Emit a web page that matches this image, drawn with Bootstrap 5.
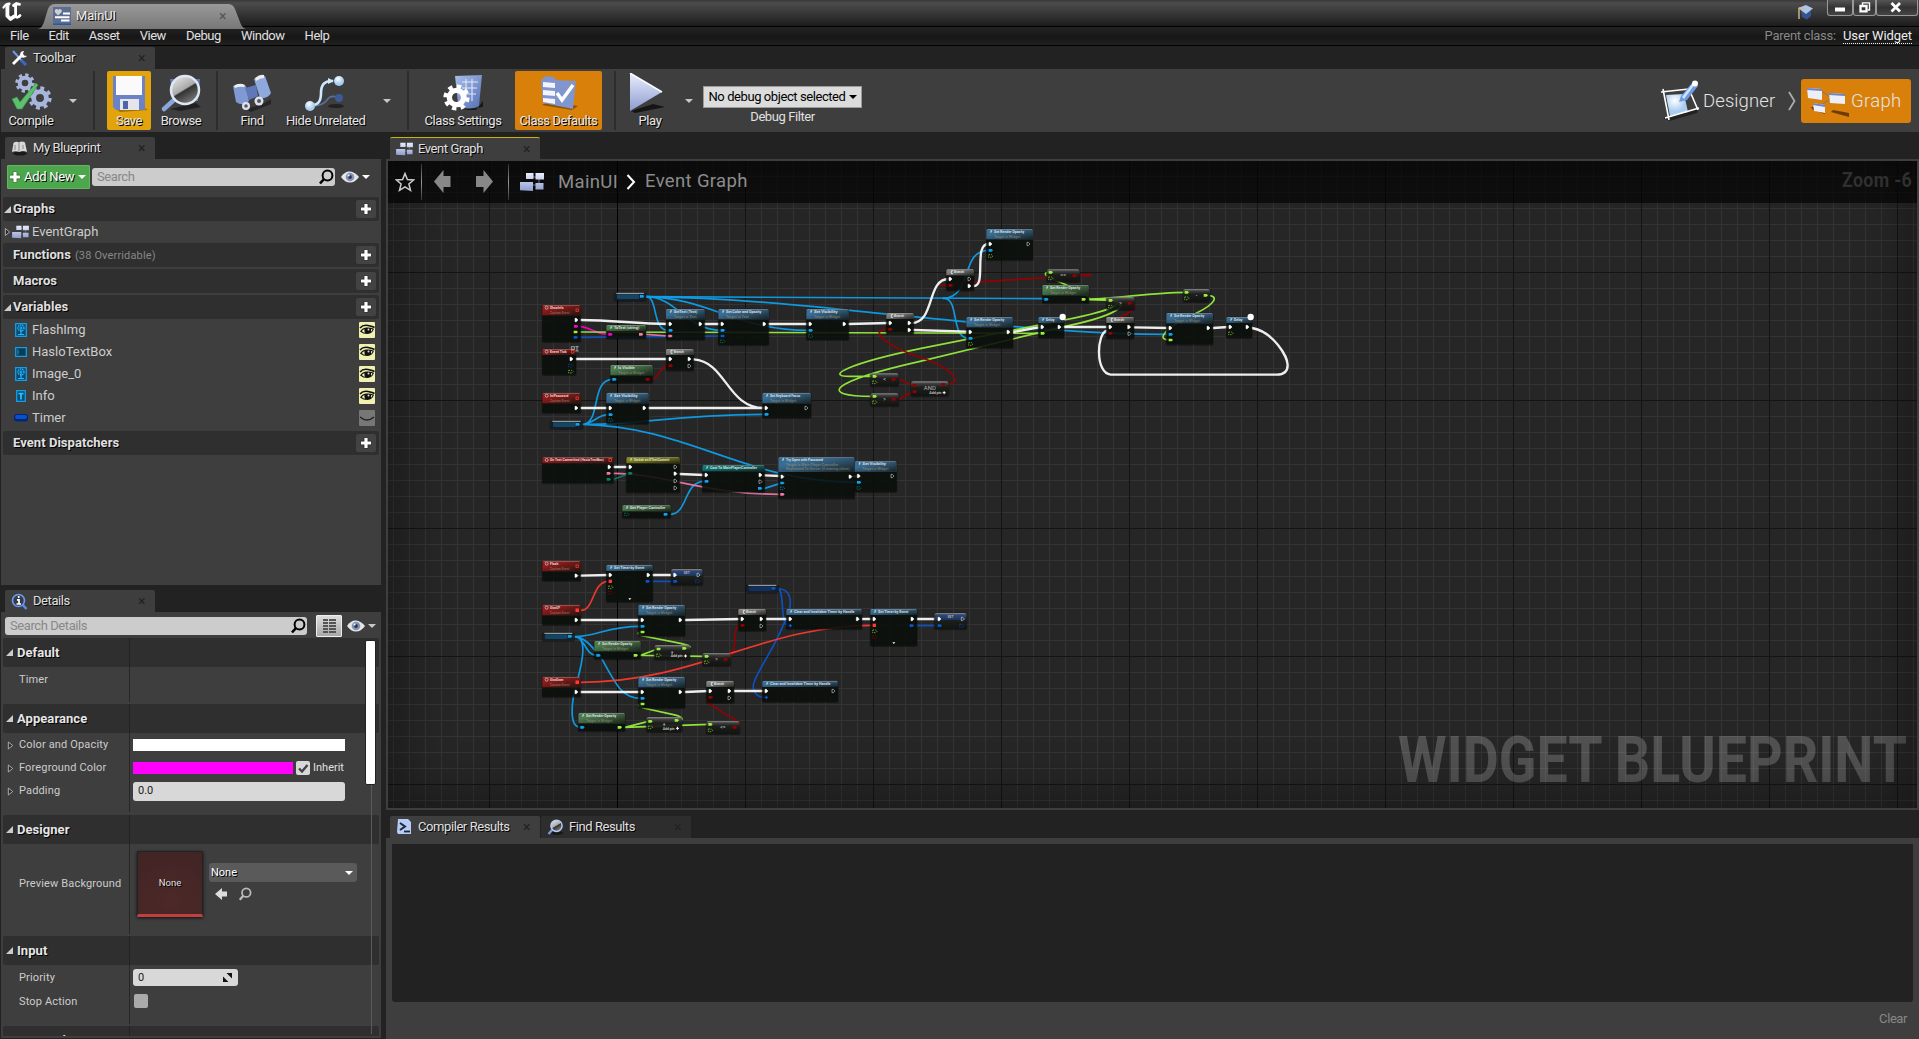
<!DOCTYPE html>
<html lang="en" data-bs-theme="dark">
<head>
<meta charset="utf-8">
<title>MainUI</title>
<link rel="stylesheet" href="https://cdn.jsdelivr.net/npm/bootstrap@5.3.0/dist/css/bootstrap.min.css">
<style>
:root{--panel:#3e3e3e;--well:#222;--head:#2f2f2f}
html,body{height:100%;overflow:hidden}
body{font:13px/16px Roboto,"Liberation Sans",sans-serif;background:var(--well);color:#e0e0e0}
svg{display:block;flex:none}
.sh{text-shadow:1px 1px 0 #000}
.cond{letter-spacing:-.42px}
.titlebar{height:27px;background:linear-gradient(#383838 0,#4c4c4c 3px,#3c3c3c 11px,#1c1c1c 26px);border-bottom:1px solid #000}
.uelogo{width:32px;height:26px}
.doctab{width:208px;height:25px;margin-left:6px;background:linear-gradient(#999,#858585 60%,#777);clip-path:path("M0 25Q4 24 6 18L10 5Q12 0 17 0H190Q195 0 197 5L202 18Q204 24 208 25Z");padding:0 18px 1px 15px;color:#eee}
.winbtn{height:16px;border:1px solid #999;border-top:0;border-radius:0 0 3px 3px;background:linear-gradient(#555,#333 50%,#444)}
.menubar{height:19px;background:linear-gradient(#242424,#161616 55%,#212121);border-bottom:1px solid #000;font-size:13px;padding:0 7px 0 10px;letter-spacing:-.45px}
.menubar .mi{margin-right:20px}
.menubar .pc{color:#888;letter-spacing:-.25px}
.dotted{border-bottom:1px dotted #eee;line-height:14px;margin-left:7px;color:#eee;letter-spacing:-.1px}
.tabrow{height:23px;padding-left:4px}
.tabx{width:150px;height:22px;background:var(--panel);padding:0 8px 0 6px;border-radius:2px 2px 0 0}
.tabx .lbl{margin-left:5px;flex:1}
.tabx.active-top{border-top:1px solid #c9b400}
.tabx.dim{background:#2d2d2d}
.cls{color:#222;font-size:14px;line-height:14px;width:9px}
.toolbar{height:63px;background:var(--panel);margin-left:1px}
.tool{height:59px;padding-top:2px;white-space:nowrap;color:#e6e6e6;border-radius:2px}
.tool .cap{line-height:16px;margin-top:0}
.tsep{width:2px;height:59px;background:#2d2d2d}
.caret{width:0;height:0;border:4px solid transparent;border-top:4px solid #c8c8c8;border-bottom:0;flex:none}
.caret.w{border-top-color:#fff}
.dbg{width:159px;height:22px;background:#dcdcdc;color:#000;border:1px solid #9c9c9c}
.modebtn{font-size:18.500px;font-weight:300;height:44px;border-radius:3px;color:#e4e4e4}
.side{width:381px}
.pane{background:var(--panel);margin-left:1px;overflow:hidden}
.addnew{width:83px;height:24px;background:#4ca64c;border:1px solid #64b464;border-radius:1px;color:#fff;padding-left:1px;white-space:nowrap;letter-spacing:-.3px}
.find{height:18px;background:#ccc;border-radius:3px;color:#888;padding:0 1px 0 5px}
.hd{height:24px;background:var(--head);border-radius:2px;margin:0 2px;font-weight:700;padding:0 3px 0 1px;letter-spacing:.05px}
.plus{width:20px;height:18px;background:#434343;border-radius:2px}
.li{height:22px;padding:0 6px 0 14px;color:#ccc}
.li .ic{width:17px}
.eye{width:16px;height:16px;background:#f0f0b0;border-radius:1px}
.eye.off{background:#777}
.tri{width:0;height:0;border-left:7px solid transparent;border-bottom:7px solid #ccc}
.dhd{height:29px;background:var(--head);border-radius:2px;font-weight:700;font-size:13px}
.dcol{width:127px;border-right:1px solid #262626;flex:none;align-self:stretch;padding-left:16px;font-size:11px;letter-spacing:.15px;color:#ccc}
.dhd .dcol{font-size:13px;padding-left:3px;letter-spacing:.05px;color:#e6e6e6;border-color:#222}
.dsec{margin:0 2px;font-size:11px}
.drow .val{padding-left:3px}
.exp{width:9px;margin-left:-12px;margin-right:3px}
.inp{background:#d8d8d8;color:#222;border-radius:3px;padding-left:5px}
.thumb{width:66px;height:66px;background:radial-gradient(circle at 50% 80%,#4d2828,#402424);border:1px solid #222;border-bottom:3px solid #c04040;box-shadow:0 1px 3px #111;font-size:9.500px}
.combo{width:148px;height:19px;background:#5a5a5a;border-radius:3px;padding:0 4px 0 2px;color:#fff}
.sbar{right:5px;top:2px;width:11px;height:145px;background:#fff;border:1px solid #222;border-radius:2px}
.sline{right:9px;top:147px;width:1px;height:249px;background:#5a5a5a}
.graphwrap{border:2px solid var(--panel);height:651px;background:#262626}
.gshade{inset:0;box-shadow:inset 0 0 55px 4px rgba(0,0,0,.42);pointer-events:none}
.ghead{height:42px;background:rgba(0,0,0,.62);left:0;right:0;top:0;color:#8c8c8c;font-size:18.500px;letter-spacing:.35px}
.gsep{width:1px;height:36px;background:linear-gradient(#333,#999,#333)}
.log{background:var(--well);height:158px;margin:6px 6px 0;border-radius:0 0 3px 3px}
</style>
</head>
<body class="d-flex flex-column">
<svg width="0" height="0" class="position-absolute">
<defs>
<linearGradient id="ice" x1="0" y1="0" x2="0" y2="1"><stop offset="0" stop-color="#e8eeff"/><stop offset="1" stop-color="#8d9cce"/></linearGradient>
<linearGradient id="blu" x1="0" y1="0" x2="1" y2="1"><stop offset="0" stop-color="#a9bfe8"/><stop offset="1" stop-color="#5570b4"/></linearGradient>
<radialGradient id="ball" cx=".4" cy=".3"><stop offset="0" stop-color="#fff"/><stop offset="1" stop-color="#a8cdf0"/></radialGradient>
<linearGradient id="lens" x1="0" y1="0" x2=".6" y2="1"><stop offset="0" stop-color="#eee"/><stop offset=".55" stop-color="#aaa"/><stop offset=".6" stop-color="#333"/><stop offset="1" stop-color="#777"/></linearGradient>
<symbol id="i-mag" viewBox="0 0 16 16"><circle cx="9.5" cy="6.5" r="4.9" fill="none" stroke="currentColor" stroke-width="2"/><path d="M6 10L2 14.5" stroke="currentColor" stroke-width="2.6"/></symbol>
<symbol id="i-plus" viewBox="0 0 12 12"><path d="M6 .8V11.2M.8 6H11.2" stroke="#000" stroke-width="4.4" opacity=".5"/><path d="M6 1V11M1 6H11" stroke="#fff" stroke-width="3.2"/></symbol>
<symbol id="i-eye" viewBox="0 0 16 16"><path d="M1 6Q4 2.500 9 3.500T15.500 5.500" fill="none" stroke="#111" stroke-width="1.600"/><path d="M1 9.500Q3 6 7 5.500T15 6.800Q13.500 11.500 8.500 12Q4 12 1 9.500Z" fill="#111"/><path d="M2.800 9Q4 7.300 5.600 7.200Q5 9 6 10.700Q4 10.500 2.800 9ZM12 7Q13 7 13.600 7.600Q13 9 12 9.800Z" fill="#f0f0b0"/><circle cx="9.500" cy="7.600" r="1" fill="#ddd"/></symbol>
<symbol id="i-eyew" viewBox="0 0 18 12"><path d="M0 6Q4 0 9 0.5T18 6Q14 11.5 9 11.5T0 6Z" fill="#e6e6e6"/><circle cx="9" cy="6" r="4.3" fill="#8292b8"/><circle cx="9" cy="6" r="1.9" fill="#2b3550"/><circle cx="7.6" cy="4.4" r="1" fill="#fff"/></symbol>
<symbol id="i-graph" viewBox="0 0 24 20"><path d="M10 5H18M12 13H18M19 5V13" stroke="#777" fill="none"/><path d="M6 1H13.5V7H6ZM15.5 1H24V7.5H15.5ZM0 10H13V19L0 18.2ZM15.5 11H23.5V17.6H15.5Z" fill="url(#ice)"/></symbol>
<symbol id="i-exp" viewBox="0 0 8 10"><path d="M1.5 1L6.5 5L1.5 9Z" fill="#2a2a2a" stroke="#bbb"/></symbol>
<symbol id="i-img" viewBox="0 0 12 14"><path d="M.7.7H11.3V13.3H.7Z" fill="#0b4a70" stroke="#119fe6" stroke-width="1.3"/><circle cx="6" cy="5" r="3" fill="#0b4a70" stroke="#23b4ff" stroke-width="1.4" stroke-dasharray="1.4 .7"/><path d="M4.5 5H7.5M6 3.5V11.5M3 11.5H9" stroke="#23b4ff" stroke-width="1.2"/></symbol>
<symbol id="i-find" viewBox="0 0 18 16"><ellipse cx="10" cy="14" rx="6" ry="1.8" fill="#181818"/><path d="M1.5 15L6 10" stroke="#7f99dc" stroke-width="2.4"/><circle cx="9.5" cy="6.8" r="5.6" fill="url(#lens)" stroke="#b9c9f0" stroke-width="1.5"/></symbol>
<symbol id="i-gear" viewBox="-10 -10 20 20"><circle r="5.3" fill="none" stroke="currentColor" stroke-width="4"/><circle r="8.2" fill="none" stroke="currentColor" stroke-width="3" stroke-dasharray="3.22 3.22"/></symbol>
</defs></svg>

<header class="titlebar d-flex align-items-start">
  <div class="uelogo"><svg width="24" height="24" viewBox="0 0 24 24"><g fill="none" stroke="#fff" stroke-linecap="round" stroke-linejoin="round"><path d="M3.500 7.500Q6 3.500 9.500 3.600Q7.600 5 7.900 8V15.500" stroke-width="2.200"/><path d="M7.400 5.500V16L10.500 19L14 16.500" stroke-width="3.800"/><path d="M15.600 5.500V16.500Q17 18.500 20 15.500M13.500 5.500L16.500 3.500L19.500 4.300" stroke-width="2.800"/></g></svg></div>
  <div class="doctab d-flex align-items-center mt-1">
    <svg width="18" height="18" viewBox="0 0 18 18" class="me-1"><path d="M0 0H18V18H0Z" fill="#5b6d92"/><path d="M0 16.5H18V18H0Z" fill="#2758a8"/><path d="M5 8.5L1.8 5Q1.5 2 3.5 2Q5 2 5.2 3.2Q5.5 2 7 2Q9 2 8.700 5Z" fill="#cfcfcf"/><path d="M10 6.500H17M2 10.200H16.500M8 13.500H16.500" stroke="#fff" stroke-width="2.100"/></svg>
    <span class="sh flex-grow-1" style="padding-left:1px;letter-spacing:-.15px">MainUI</span><span class="cls" style="color:#555">×</span>
  </div>
  <div class="ms-auto d-flex">
    <svg width="18" height="17" viewBox="0 0 18 17" class="me-2 mt-1"><path d="M4 7L5 13L10 15.500L14 12V7Z" fill="#33548c"/><path d="M1 4L9 1L16 4.500L9 10Z" fill="#a8c6f0"/><path d="M2 4V15M2 4L9 5" stroke="#d8b98a" stroke-width="1.400" fill="none"/></svg>
    <span class="winbtn ms-1" style="width:26px"><svg width="24" height="15"><path d="M7 9.500H17" stroke="#fff" stroke-width="4"/></svg></span>
    <span class="winbtn" style="width:23px"><svg width="21" height="15"><path d="M8.500 5V2.900H15.500V10H13.500" fill="none" stroke="#fff" stroke-width="1.400"/><path d="M6.500 6H12.500V11.300H6.500Z" fill="none" stroke="#fff" stroke-width="2.300"/></svg></span>
    <span class="winbtn" style="width:42px;margin-right:1px"><svg width="40" height="15"><path d="M14.500 3L23 11.500M23 3L14.500 11.500" stroke="#fff" stroke-width="2.800"/></svg></span>
  </div>
</header>
<nav class="menubar d-flex align-items-center">
  <span class="mi">File</span><span class="mi">Edit</span><span class="mi">Asset</span><span class="mi">View</span><span class="mi">Debug</span><span class="mi">Window</span><span class="mi">Help</span>
  <span class="ms-auto pc">Parent class:</span><span class="dotted">User Widget</span>
</nav>
<div class="tabrow d-flex align-items-end" style="padding-left:5px"><div class="tabx d-flex align-items-center">
  <svg width="17" height="16" viewBox="0 0 17 16"><path d="M2 1L11 11" stroke="#6f9be8" stroke-width="2"/><path d="M10 10L15 15" stroke="#3868c8" stroke-width="3"/><path d="M2 14L10 6" stroke="#fff" stroke-width="2.800"/><path d="M10 2Q8 5 10 7Q13 9 16 6L13 5.500L12 3.500L13 1Q11 1 10 2Z" fill="#fff"/></svg>
  <span class="lbl sh" style="letter-spacing:-.25px">Toolbar</span><span class="cls">×</span></div></div>

<div class="toolbar d-flex align-items-center flex-shrink-0">
  <div class="tool text-center" style="width:60px"><svg width="42" height="40" viewBox="0 0 42 40" class="mx-auto"><g color="#a9b6dc"><use href="#i-gear" x="5" y="0" width="20" height="20"/><use href="#i-gear" x="18" y="13" width="24" height="24"/></g><path d="M2 26L7 24L10 29L26 10L28 12L12 36H7Z" fill="#5cc06c" stroke="#3d8f4a" stroke-width=".6"/></svg><div class="cap sh cond">Compile</div></div>
  <div class="d-flex justify-content-center" style="width:24px"><i class="caret"></i></div>
  <div class="tsep ms-2"></div>
  <div class="tool text-center" style="width:44px;margin-left:12px;background:#e2a30c"><svg width="38" height="40" viewBox="0 0 38 40" class="mx-auto"><path d="M6 36L30 32L38 37L10 39Z" fill="#7a5200" opacity=".6"/><path d="M3 3H35V37H6L3 34Z" fill="#6a83c6"/><path d="M6 3H32V22H6Z" fill="#fafafa"/><path d="M10 26H29V37H10Z" fill="#e4e4ea"/><path d="M13 28H18V36H13Z" fill="#4d64a8"/></svg><div class="cap sh cond">Save</div></div>
  <div class="tool text-center" style="width:60px"><svg width="42" height="40" viewBox="0 0 42 40" class="mx-auto"><path d="M10 36L36 30L41 34L20 38Z" fill="#151515" opacity=".7"/><path d="M10 6L40 6L38 28L14 28Z" fill="#5f78b8"/><path d="M4 36L15 26" stroke="#8ba6dd" stroke-width="4.500" stroke-linecap="round"/><circle cx="25" cy="17" r="14" fill="url(#lens)" stroke="#dfe6f4" stroke-width="2.500"/></svg><div class="cap sh cond">Browse</div></div>
  <div class="tsep" style="margin-left:5px"></div>
  <div class="tool text-center" style="width:68px"><svg width="42" height="40" viewBox="0 0 42 40" class="mx-auto"><path d="M14 36L30 32L40 26L40 31L20 39Z" fill="#151515" opacity=".6"/><path d="M2 13Q8 9 15 13L18 28Q12 34 5 29Z" fill="#8099d2"/><path d="M23 6Q29 2 34 3L40 20Q37 26 29 25Z" fill="#8fa8de"/><path d="M14 15L25 12L27 23L18 27Z" fill="#6078b8"/><path d="M3 13Q8 9 14 12L13 14Q8 13 4 15ZM24 5Q29 1 33 2L33 5Q29 5 25 8Z" fill="#eee"/><circle cx="15" cy="33" r="4" fill="#dde3ee"/><circle cx="28" cy="28" r="4.500" fill="#dde3ee"/><circle cx="15" cy="33" r="1.800" fill="#556"/><circle cx="28" cy="28" r="2" fill="#556"/></svg><div class="cap sh cond">Find</div></div>
  <div class="tool text-center" style="width:78px"><svg width="44" height="40" viewBox="0 0 44 40" class="mx-auto"><path d="M8 33Q20 33 24 27T36 25" fill="none" stroke="#587098" stroke-width="1.800"/><circle cx="36" cy="25" r="4" fill="#3d5a94"/><ellipse cx="33" cy="33" rx="8" ry="2" fill="#222"/><path d="M8 32Q18 33 18 20T30 8" fill="none" stroke="#cde8ff" stroke-width="2.600"/><path d="M25 5L31 8L25 11Z" fill="#cde8ff"/><circle cx="7" cy="33" r="5" fill="url(#ball)"/><circle cx="36" cy="8" r="5" fill="url(#ball)"/></svg><div class="cap sh cond">Hide Unrelated</div></div>
  <div class="d-flex justify-content-center" style="width:43px;padding-left:2px"><i class="caret"></i></div>
  <div class="tsep"></div>
  <div class="tool text-center" style="width:90px;margin-left:9px;margin-right:1px"><svg width="42" height="40" viewBox="0 0 42 40" class="mx-auto"><path d="M20 37L34 37L41 28L41 34Z" fill="#181818"/><path d="M13 3L40 2L37 33Q30 37 20 34L16 30Z" fill="url(#blu)"/><path d="M20 9H36M20 15H35M21 21H34M24 6V26M30 6V28" stroke="#dfe8ff" stroke-width="1.100"/><g color="#fff"><use href="#i-gear" x="1" y="11" width="27" height="27"/></g></svg><div class="cap sh cond">Class Settings</div></div>
  <div class="tool text-center" style="width:87px;margin-left:6px;background:#d9800a"><svg width="42" height="40" viewBox="0 0 42 40" class="mx-auto"><path d="M4 32L34 37L40 33L12 28Z" fill="#6e3c00" opacity=".7"/><path d="M3 7L8 3L16 4L18 7L38 8L35 36L5 30Z" fill="#7f96cf"/><path d="M5 9L17 10V15L5 14ZM5 17L17 18V23L5 22ZM5 25L17 26V31L5 29Z" fill="#f4f4fa"/><path d="M19 20L24 27L35 12" fill="none" stroke="#fff" stroke-width="3.400"/></svg><div class="cap sh cond">Class Defaults</div></div>
  <div class="tsep" style="margin-left:12px"></div>
  <div class="tool text-center" style="width:60px;margin-left:4px"><svg width="42" height="40" viewBox="0 0 42 40" class="mx-auto"><path d="M2 38L24 31L36 34L6 40Z" fill="#151515"/><path d="M1 0L33 19L1 38Z" fill="url(#ice)"/><path d="M1 0L33 19" stroke="#fff" stroke-width="1.500"/></svg><div class="cap sh cond">Play</div></div>
  <div class="d-flex justify-content-center" style="width:18px"><i class="caret"></i></div>
  <div class="text-center" style="margin-left:5px;padding-top:10px"><div class="dbg d-flex align-items-center justify-content-center cond">No debug object selected<i class="caret" style="border-top-color:#000;margin-left:3px"></i></div><div class="cond" style="margin-top:1px">Debug Filter</div></div>
  <div class="ms-auto d-flex align-items-center">
    <div class="modebtn d-flex align-items-center"><svg width="42" height="42" viewBox="0 0 42 42"><path d="M4 38L40 29L38 33L10 41Z" fill="#222"/><path d="M7 15L25 14L29 32L11 36Z" fill="url(#ball)"/><path d="M2 12L30 9M4 9L10 40M6 38L40 28M30 9L39 30" stroke="#fff" stroke-width="1.600"/><path d="M20 22L22 16L33 3L39 6L28 20Z" fill="#6d9ae0"/><path d="M23 17L34 3L36 4L25 19Z" fill="#cfe2ff"/><circle cx="36" cy="3.500" r="3" fill="#fff"/></svg><span style="margin-left:2px;width:84px;letter-spacing:.1px">Designer</span></div>
    <svg width="10" height="20" viewBox="0 0 10 20" class="me-1"><path d="M2 1L7.500 10L2 19" fill="none" stroke="#aaa" stroke-width="1.800"/></svg>
    <div class="modebtn d-flex align-items-center me-2" style="width:110px;background:#d9800a"><svg width="46" height="34" viewBox="0 0 46 34" style="margin-left:4px"><path d="M6 23L16 22L20 30L8 26ZM28 26L44 29L44 33L26 28Z" fill="#6e3c00"/><path d="M15 6L25 13M15 22L25 15" stroke="#778"/><path d="M2 4L17 5V16L3 14ZM24 9L40 10V20L25 19ZM8 19L20 21V29L9 27Z" fill="#eceefa"/><path d="M2 4L17 5V7L2 6ZM24 9L40 10V12L24 11ZM8 19L20 21V23L8 21Z" fill="#6d84c8"/></svg><span style="letter-spacing:.35px">Graph</span></div>
  </div>
</div>

<main class="d-flex flex-grow-1" style="min-height:0">
<aside class="side d-flex flex-column flex-shrink-0">
  <div class="tabrow d-flex align-items-end" style="height:27px;padding-left:5px"><div class="tabx d-flex align-items-center">
    <svg width="17" height="16" viewBox="0 0 17 16"><ellipse cx="9" cy="13.500" rx="7" ry="2" fill="#1a1a1a"/><path d="M2.500 3Q5 1 8 2.500Q11 .5 14 2.500L16 12Q12 10 8.500 12Q4 10.500 1 12Z" fill="#d8d8d8"/><path d="M8 3V11.500M4 5V10M12 5V9" stroke="#888"/></svg>
    <span class="lbl sh cond">My Blueprint</span><span class="cls">×</span></div></div>
  <section class="pane" style="height:426px">
    <div class="d-flex align-items-center" style="height:36px;padding:0 0 0 6px;margin-bottom:2px">
      <div class="addnew d-flex align-items-center sh"><svg width="12" height="12"><use href="#i-plus"/></svg><span style="margin-left:3px">Add New</span><i class="caret w ms-1"></i></div>
      <div class="find d-flex align-items-center" style="width:243px;margin-left:2px"><span class="flex-grow-1 cond">Search</span><svg width="16" height="16" color="#000"><use href="#i-mag"/></svg></div>
      <svg width="18" height="12" style="margin-left:6px"><use href="#i-eyew"/></svg><i class="caret w" style="margin-left:3px"></i>
    </div>
    <div class="hd d-flex align-items-center"><i class="tri"></i><span class="sh flex-grow-1" style="margin-left:2px">Graphs</span><b class="plus d-grid" style="place-items:center"><svg width="12" height="12"><use href="#i-plus"/></svg></b></div>
    <div class="li d-flex align-items-center" style="padding-left:3px"><svg width="7" height="10"><use href="#i-exp"/></svg><svg width="17" height="14" style="margin:0 3px 0 1px"><use href="#i-graph"/></svg><span>EventGraph</span></div>
    <div class="hd d-flex align-items-center" style="margin-bottom:2px"><span class="sh" style="margin-left:9px">Functions</span><span class="flex-grow-1 fw-normal" style="font-size:11px;color:#888;margin-left:4px;padding-top:2px;letter-spacing:.15px">(38 Overridable)</span><b class="plus d-grid" style="place-items:center"><svg width="12" height="12"><use href="#i-plus"/></svg></b></div>
    <div class="hd d-flex align-items-center" style="margin-bottom:2px"><span class="sh flex-grow-1" style="margin-left:9px">Macros</span><b class="plus d-grid" style="place-items:center"><svg width="12" height="12"><use href="#i-plus"/></svg></b></div>
    <div class="hd d-flex align-items-center"><i class="tri"></i><span class="sh flex-grow-1" style="margin-left:2px">Variables</span><b class="plus d-grid" style="place-items:center"><svg width="12" height="12"><use href="#i-plus"/></svg></b></div>
    <div class="li d-flex align-items-center"><span class="ic"><svg width="12" height="14"><use href="#i-img"/></svg></span><span class="flex-grow-1">FlashImg</span><span class="eye"><svg width="16" height="16"><use href="#i-eye"/></svg></span></div>
    <div class="li d-flex align-items-center"><span class="ic"><svg width="12" height="10"><path d="M.7.7H11.300V9.300H.7Z" fill="#0b3a58" stroke="#119fe6" stroke-width="1.300"/><path d="M3 2.500V7.500" stroke="#119fe6"/></svg></span><span class="flex-grow-1">HasloTextBox</span><span class="eye"><svg width="16" height="16"><use href="#i-eye"/></svg></span></div>
    <div class="li d-flex align-items-center"><span class="ic"><svg width="12" height="14"><use href="#i-img"/></svg></span><span class="flex-grow-1">Image_0</span><span class="eye"><svg width="16" height="16"><use href="#i-eye"/></svg></span></div>
    <div class="li d-flex align-items-center"><span class="ic"><svg width="12" height="12"><path d="M1.700.7H10.300V11.300H1.700Z" fill="#0b4a70" stroke="#119fe6" stroke-width="1.300"/><path d="M3.500 3.700H8.500M6 3.500V9.500" stroke="#2dbbff" stroke-width="1.800"/></svg></span><span class="flex-grow-1">Info</span><span class="eye"><svg width="16" height="16"><use href="#i-eye"/></svg></span></div>
    <div class="li d-flex align-items-center"><span class="ic"><svg width="14" height="8" style="margin-left:-1px"><rect width="14" height="7.500" rx="3" fill="#00267a"/><rect x="1" y="1" width="12" height="4" rx="2" fill="#0a50c8"/></svg></span><span class="flex-grow-1">Timer</span><span class="eye off"><svg width="16" height="16"><path d="M1 7Q8 13 15 7" fill="none" stroke="#222" stroke-width="1.400"/></svg></span></div>
    <div class="hd d-flex align-items-center" style="margin-top:2px"><span class="sh flex-grow-1" style="margin-left:9px">Event Dispatchers</span><b class="plus d-grid" style="place-items:center"><svg width="12" height="12"><use href="#i-plus"/></svg></b></div>
  </section>
  <div class="tabrow d-flex align-items-end" style="height:27px;padding-left:5px"><div class="tabx d-flex align-items-center">
    <svg width="17" height="17" viewBox="0 0 17 17"><path d="M11 11L15.500 16" stroke="#5b8ae8" stroke-width="2.600"/><circle cx="7.500" cy="7.500" r="6" fill="#333a48" stroke="#6c98ee" stroke-width="1.700"/><path d="M7.700 3V5M6 6.800H8V11M5.500 11H10" stroke="#fff" stroke-width="1.700" fill="none"/></svg>
    <span class="lbl sh cond">Details</span><span class="cls">×</span></div></div>
  <section class="pane position-relative" style="height:426px">
    <div class="d-flex align-items-center" style="height:26px;padding:2px 0 0 4px">
      <div class="find d-flex align-items-center" style="width:302px"><span class="flex-grow-1 cond">Search Details</span><svg width="16" height="16" color="#000"><use href="#i-mag"/></svg></div>
      <div style="width:26px;height:22px;margin-left:9px;background:linear-gradient(#ddd,#a8a8a8);border:1px solid #eee;border-radius:1px"><svg width="24" height="20"><path d="M6 4H11M12 4H19M6 7H11M12 7H19M6 10H11M12 10H19M6 13H11M12 13H19M6 16H11M12 16H19" stroke="#555" stroke-width="1.800"/></svg></div>
      <svg width="18" height="12" style="margin-left:5px"><use href="#i-eyew"/></svg><i class="caret" style="margin-left:3px"></i>
    </div>
    <div class="position-relative" style="height:399px;overflow:hidden">
      <div class="dsec" style="height:66px"><div class="dhd d-flex"><div class="dcol d-flex align-items-center"><i class="tri"></i><span class="sh ms-1">Default</span></div></div>
        <div class="drow d-flex" style="height:35px"><div class="dcol d-flex align-items-center" style="padding-bottom:10px">Timer</div></div></div>
      <div class="dsec" style="height:111px"><div class="dhd d-flex"><div class="dcol d-flex align-items-center"><i class="tri"></i><span class="sh ms-1">Appearance</span></div></div>
        <div class="drow d-flex align-items-center" style="height:24px"><div class="dcol d-flex align-items-center"><span class="exp"><svg width="7" height="9"><use href="#i-exp"/></svg></span>Color and Opacity</div><div class="val"><div style="width:212px;height:12px;background:#fff"></div></div></div>
        <div class="drow d-flex align-items-center" style="height:22px"><div class="dcol d-flex align-items-center"><span class="exp"><svg width="7" height="9"><use href="#i-exp"/></svg></span>Foreground Color</div><div class="val d-flex align-items-center"><div style="width:160px;height:12px;background:#f0f"></div><svg width="14" height="14" style="margin:0 3px"><rect width="14" height="14" rx="2" fill="#d8d8d8"/><path d="M3 7.500L6 10.500L11.500 4" fill="none" stroke="#444" stroke-width="2.400"/></svg><span>Inherit</span></div></div>
        <div class="drow d-flex align-items-center" style="height:33px"><div class="dcol d-flex align-items-center" style="padding-bottom:9px"><span class="exp"><svg width="7" height="9"><use href="#i-exp"/></svg></span>Padding</div><div class="val" style="padding-bottom:9px"><div class="inp d-flex align-items-center" style="width:212px;height:19px">0.0</div></div></div></div>
      <div class="dsec" style="height:121px"><div class="dhd d-flex"><div class="dcol d-flex align-items-center"><i class="tri"></i><span class="sh ms-1">Designer</span></div></div>
        <div class="drow d-flex" style="height:90px"><div class="dcol d-flex align-items-center" style="padding-bottom:11px">Preview Background</div><div class="d-flex" style="padding:7px 0 0 7px"><div class="thumb d-flex align-items-center justify-content-center sh">None</div><div style="margin:12px 0 0 6px"><div class="combo d-flex align-items-center justify-content-between sh">None<i class="caret w"></i></div><div class="d-flex" style="padding:6px 0 0 6px"><svg width="14" height="12"><path d="M0 6L7 0V3.500H12V8.500H7V12Z" fill="#ddd"/></svg><svg width="14" height="14" color="#bbb" style="margin-left:9px;margin-top:-1px"><use href="#i-mag"/></svg></div></div></div></div></div>
      <div class="dsec" style="height:90px"><div class="dhd d-flex"><div class="dcol d-flex align-items-center"><i class="tri"></i><span class="sh ms-1">Input</span></div></div>
        <div class="drow d-flex align-items-center" style="height:25px"><div class="dcol d-flex align-items-center">Priority</div><div class="val"><div class="inp d-flex align-items-center justify-content-between" style="width:105px;height:17px;padding-right:6px">0<svg width="9" height="9"><path d="M3.500 0H9V5.500L7 3.500ZM0 3.500L5.500 9H0Z" fill="#111"/></svg></div></div></div>
        <div class="drow d-flex align-items-center" style="height:34px"><div class="dcol d-flex align-items-center" style="padding-bottom:11px">Stop Action</div><div class="val" style="padding:0 0 12px 4px"><div style="width:14px;height:14px;background:#aaa;border-radius:2px"></div></div></div></div>
      <div class="dsec" style="height:10px;overflow:hidden"><div class="dhd d-flex"><div class="dcol d-flex align-items-center"><i class="tri invisible"></i><span class="ms-1">Interaction</span></div></div></div>
      <div class="position-absolute sbar"></div><div class="position-absolute sline"></div>
    </div>
  </section>
</aside>

<div class="flex-grow-1 d-flex flex-column" style="margin-left:5px;min-width:0">
  <div class="tabrow d-flex align-items-end" style="height:27px"><div class="tabx active-top d-flex align-items-center">
    <svg width="17" height="14"><use href="#i-graph"/></svg><span class="lbl sh cond">Event Graph</span><span class="cls">×</span></div></div>
  <div class="graphwrap position-relative overflow-hidden">
    <svg id="canvas" width="1529" height="647" viewBox="388 161 1529 647" font-family="Roboto,'Liberation Sans',sans-serif">
      <defs>
        <pattern id="minor" x="617" y="144" width="16" height="16" patternUnits="userSpaceOnUse"><path d="M.5 0V16M0 .5H16" stroke="#343434"/></pattern>
        <pattern id="major" x="617" y="144" width="128" height="128" patternUnits="userSpaceOnUse"><path d="M.5 0V128M0 .5H128" stroke="#141414"/></pattern>
        <linearGradient id="fade" x1="0" y1="0" x2="1" y2="1"><stop offset=".3" stop-color="#101410" stop-opacity="0"/><stop offset="1" stop-color="#101410" stop-opacity=".85"/></linearGradient>
        <linearGradient id="gloss" x1="0" y1="0" x2="0" y2="1"><stop offset="0" stop-color="#999"/><stop offset=".15" stop-color="#444"/><stop offset=".4" stop-color="#1e201e"/><stop offset="1" stop-color="#111311"/></linearGradient>
      </defs>
      <path d="M388 161H1917V808H388Z" fill="#262626"/><path d="M388 161H1917V808H388Z" fill="url(#minor)"/><path d="M388 161H1917V808H388Z" fill="url(#major)"/>
      <path d="M617.500 161V808" stroke="#000"/>
      <g transform="translate(530 280) scale(.33333)"><g id="wires" fill="none" stroke-linecap="round"></g><g id="nodes"></g></g>
      <text x="1398" y="782" font-size="64.700" font-weight="700" fill="#fff" fill-opacity=".2" textLength="509" lengthAdjust="spacingAndGlyphs">WIDGET BLUEPRINT</text>
    </svg>
    <div class="position-absolute gshade"></div>
    <div class="position-absolute ghead d-flex align-items-center">
      <svg width="20" height="20" viewBox="0 0 20 20" style="margin-left:7px"><path d="M10 1.500L12.400 7.500L18.800 7.900L13.900 12L15.500 18.300L10 14.800L4.500 18.300L6.100 12L1.200 7.900L7.600 7.500Z" fill="none" stroke="#ccc" stroke-width="1.500"/></svg>
      <span class="gsep" style="margin-left:6px"></span>
      <svg width="17" height="23" viewBox="0 0 17 23" style="margin:0 0 2px 12px"><path d="M0 11.500L9.500 0V6H16.500V17H9.500V23Z" fill="#888"/></svg>
      <svg width="17" height="23" viewBox="0 0 17 23" style="margin:0 0 2px 25px"><path d="M17 11.500L7.500 0V6H0V17H7.500V23Z" fill="#888"/></svg>
      <span class="gsep" style="margin-left:15px"></span>
      <svg width="24" height="20" style="margin:0 0 1px 11px"><use href="#i-graph"/></svg>
      <span style="margin-left:14px;width:61px;padding-bottom:1px">MainUI</span>
      <svg width="10" height="16" style="margin-left:7px"><path d="M1.500 1L8 8L1.500 15" fill="none" stroke="#fff" stroke-width="2"/></svg>
      <span style="margin-left:9px;padding-bottom:2px">Event Graph</span>
      <svg width="78" height="26" class="ms-auto"><text x="3" y="18" font-size="20" font-weight="700" fill="#303030" textLength="70" lengthAdjust="spacingAndGlyphs">Zoom -6</text></svg>
    </div>
  </div>
  <div class="tabrow d-flex align-items-end" style="height:28px"><div class="tabx d-flex align-items-center">
    <svg width="17" height="16" viewBox="0 0 17 16"><path d="M2 0H12L15 3V15H2L1 13Z" fill="#b6ccf4"/><path d="M4 4L9 7.500L4 11" fill="none" stroke="#1c2540" stroke-width="2"/><path d="M8 12.500H14" stroke="#1c2540" stroke-width="1.800"/></svg>
    <span class="lbl sh cond">Compiler Results</span><span class="cls">×</span></div>
    <div class="tabx dim d-flex align-items-center" style="margin-left:1px"><svg width="18" height="16"><use href="#i-find"/></svg><span class="lbl sh cond" style="margin-left:4px">Find Results</span><span class="cls">×</span></div></div>
  <div class="flex-grow-1" style="background:var(--panel)"><div class="log"></div><div class="text-end cond" style="color:#888;padding:9px 12px 0 0">Clear</div></div>
</div>
</main>

<script>
const C={w:'#fff',b:'#0ba2f0',g:'#97f23c',m:'#f0c',p:'#ee7ba8',n:'#0b54c8',t:'#0b7c68',r:'#960000',o:'#ff3a30'};
const HEAD={ev:'#a01c1c',fn:'#427aa6',gr:'#56895a',br:'#8f8f8f',ye:'#95951c',te:'#108484'};
const W=[],N=[];
// dx, dy shift a whole cluster of the graph
const wire=(c,d,dx=0,dy=0)=>W.push(`<path transform="translate(${dx} ${dy})" d="${d}" stroke="${C[c]}" stroke-width="${c=='w'?7:5}" opacity="${c=='r'?.95:.92}"/>`);
function pin(k,x,y){
  const l=k.toLowerCase(),hollow=k!=l;
  if(k=='+')return `<path d="M${x-5} ${y}h10M${x} ${y-5}v10" stroke="${C.n}" stroke-width="4"/>`;
  if(l=='w')return `<path d="M${x-4} ${y-5}h4l5 5l-5 5h-4z" fill="${hollow?'none':'#fff'}" stroke="#fff" stroke-width="1.500"/>`;
  if(k=='o')return `<rect x="${x-5}" y="${y-5}" width="10" height="10" fill="${C.o}"/>`;
  return `<path d="M${x-6} ${y-4}h9l4 4l-4 4h-9z" ${hollow?`fill="none" stroke="${k=='T'?'#0c8c74':C[l]}" stroke-width="2" stroke-dasharray="4 3"`:`fill="${C[l]}"`}/>`;
}
const pinSet=s=>s?s.split(' ').map(p=>{const[x,y]=p.slice(1).split(',').map(Number);return pin(p[0],x,y)}).join(''):'';
const label=(x,y,s,o)=>`<text x="${x}" y="${y}" ${o}>${s.replace('<','&lt;')}</text>`;
function node(kind,x,y,w,h,title,subs,pins,dx=0,dy=0){
  let s=`<rect x="${x-2}" y="${y-1}" width="${w+4}" height="${h+5}" rx="6" fill="#000" opacity=".35"/>`;
  if(kind=='pill'||kind=='npill'){
    s+=`<rect x="${x}" y="${y}" width="${w}" height="${h}" rx="8" fill="#152028"/><rect x="${x+8}" y="${y+4}" width="${w-28}" height="${h-8}" rx="5" fill="${kind=='pill'?'#14618c':'#153a80'}" opacity=".6"/><path d="M${x+6} ${y+1}H${x+w-6}" stroke="#ccc" stroke-width="2.500"/>`;
  }else if(kind=='op'||kind=='set'){
    s+=`<rect x="${x}" y="${y}" width="${w}" height="${h}" rx="7" fill="url(#gloss)" opacity=".9"/>`;
    if(kind=='set')s+=`<rect x="${x+3}" y="${y+3}" width="${w-6}" height="18" rx="4" fill="#1d4b9c" opacity=".5"/>`;
    s+=label(x+w/2,y+(kind=='set'?15:title=='AND'?26:h/2+5),title,`font-size="${title=='AND'?18:kind=='set'?10:15}" font-weight="${title=='AND'?400:700}" fill="#b4b4b4" text-anchor="middle"`);
    if(subs[0])s+=label(x+w-58,y+h-6,subs[0],'font-size="11" font-weight="700" fill="#bbb" textLength="36"')+`<path d="M${x+w-18} ${y+h-10}h9M${x+w-13.5} ${y+h-14.5}v9" stroke="#fff" stroke-width="3"/>`;
  }else{
    const hh=18+13*subs.length;
    s+=`<rect x="${x}" y="${y}" width="${w}" height="${h}" rx="4" fill="#0c100c" opacity=".85"/><path d="M${x} ${y+hh}V${y+4}q0 -4 4 -4H${x+w-4}q4 0 4 4V${y+hh}Z" fill="${HEAD[kind]}" opacity=".88"/><path d="M${x} ${y+hh}V${y}H${x+w}V${y+hh}Z" fill="url(#fade)"/><path d="M${x+3} ${y+1}H${x+w-3}" stroke="#bbb" stroke-width="2" opacity=".6"/>`;
    s+=kind=='ev'?`<circle cx="${x+13}" cy="${y+8}" r="4.500" fill="none" stroke="#ddd" stroke-width="2"/>`:kind=='br'?`<path d="M${x+20} ${y+4}h-5v9h5" fill="none" stroke="#eee" stroke-width="2.500"/>`:label(x+12,y+12,'f','font-size="12" font-weight="700" font-style="italic" fill="#dff"');
    s+=label(x+23,y+12,title,`font-size="10.500" font-weight="700" fill="#ddd" textLength="${Math.min(title.length*5.05,w-32)}" lengthAdjust="spacingAndGlyphs"`);
    subs.forEach((t,i)=>s+=label(x+23,y+27+i*12,t,`font-size="10" font-weight="700" fill="#b0a080" opacity=".5" textLength="${t.length*4.9}" lengthAdjust="spacingAndGlyphs"`));
    if(kind=='ev')s+=`<rect x="${x+w-14}" y="${y+(subs.length?12:4)}" width="8" height="8" fill="none" stroke="#ff4a3a" stroke-width="2"/>`;
  }
  N.push(`<g transform="translate(${dx} ${dy})">${s+pinSet(pins)}</g>`);
}
const TW=['Target is Widget'],TT=['Target is Text'],CE=['Custom Event'],SRO='Set Render Opacity',GRO='Get Render Opacity';
// reveal and password clusters
node('pill',253,39,95,22,'',[],'b336,49');
node('ev',37,75,115,110,'ShowInfo',CE,'w139,120 m138,139 g137,156 n137,172');
node('gr',229,135,119,40,'ToText (string)',[],'m241,163 p333,163');
node('fn',408,87,116,92,'SetText (Text)',TT,'w421,132 w511,132 b422,151 p421,168');
node('fn',565,87,151,108,'Set Color and Opacity',TT,'w577,132 w703,132 b578,151 n578,168 T578,184');
node('fn',829,87,127,92,'Set Visibility',TW,'w841,132 w943,132 b842,151 T842,168');
node('br',1069,99,82,63,'Branch',[],'w1081,129 w1138,129 r1081,148 w1138,150');
node('ev',37,207,101,77,'Event Tick',[],'w124,237 N122,257 G122,275');
node('br',408,207,83,64,'Branch',[],'w421,237 w478,237 r422,257 W478,258');
node('gr',241,255,127,53,'Is Visible',TW,'b253,298 r353,298');
node('ev',37,339,115,59,'IniPassword',CE,'w139,384');
node('fn',229,339,127,92,'Set Visibility',TW,'w241,384 w343,384 b242,404 T242,420');
node('fn',697,339,146,74,'Set Keyboard Focus',TW,'w709,384 W829,384 b710,403');
node('pill',61,423,97,22,'',[],'b143,433');
node('ev',37,532,214,77,'On Text Committed (HasloTextBox)',[],'w238,561 p236,580 t236,598');
node('ye',289,532,160,105,'Switch on ETextCommit',[],'w301,561 t301,580 W436,561 w436,581 W436,603 W436,624');
node('te',517,556,187,80,'Cast To MainPlayerController',[],'w529,585 b530,604 w691,585 W691,605 b690,625');
node('fn',745,532,229,123,'Try Open with Password',['Target is Main Player Controller','Replicated To Server (if owning client)'],'w757,590 w961,590 b757,609 B757,625 p757,643');
node('fn',974,544,126,91,'Set Visibility',TW,'w986,588 W1087,588 b987,607 T987,624');
node('gr',277,676,145,38,'Get Player Controller',[],'T290,703 b407,703');
node('op',1021,280,85,38,'<',[],'g1034,289 G1034,307 r1091,298');
node('op',1021,340,85,38,'>',[],'g1034,349 G1034,367 r1091,358');
node('op',1143,304,113,44,'AND',['Add pin'],'r1154,316 r1154,335 r1240,313');
// fade loop cluster
const B=[1170,-210];
node('fn',199,57,140,93,SRO,TW,'w211,102 W325,102 b212,121 G212,138',...B);
node('br',79,178,83,63,'Branch',[],'w91,207 W148,207 r92,226 w148,228',...B);
node('op',380,178,99,37,'==',[],'g392,187 G392,205 r464,197',...B);
node('gr',367,225,140,54,GRO,TW,'b379,268 g491,268',...B);
node('fn',139,321,140,92,SRO,TW,'w151,366 w265,366 b152,385 G152,402',...B);
node('fn',355,321,77,62,'Delay',[],'w367,351 w418,351 g368,370',...B);
node('op',559,261,85,38,'>',[],'g572,271 G572,290 r629,280',...B);
node('br',559,321,83,64,'Branch',[],'w571,351 w627,351 r572,370 W628,371',...B);
node('op',789,237,81,38,'-',[],'g800,247 G800,265 g857,256',...B);
node('fn',739,309,140,94,SRO,TW,'w751,354 w865,354 b752,373 g752,390',...B);
node('fn',919,321,77,62,'Delay',[],'w931,351 w982,351 G932,370',...B);
N.push('<circle cx="1598" cy="111" r="9.500" fill="#fff"/><circle cx="2162" cy="111" r="9.500" fill="#fff"/>');
// glow cluster
const D=[0,780],CL='Clear and Invalidate Timer by Handle',ST='Set Timer by Event';
node('ev',37,63,115,59,'Flash',CE,'w139,107',...D);
node('fn',229,75,139,110,ST,[],'w241,105 w355,105 o241,124 n353,124 G242,142 R242,158',...D);
node('set',423,87,95,48,'SET',[],'w435,105 W505,105 n436,124 N503,124',...D);
node('ev',37,195,115,59,'GlowUP',CE,'w139,240 o142,211',...D);
node('fn',325,195,140,93,SRO,TW,'w337,240 w451,240 b338,259 g338,276',...D);
node('pill',37,279,96,22,'',[],'b120,289',...D);
node('gr',193,303,139,54,GRO,TW,'b205,346 g317,346',...D);
node('op',373,315,107,43,'+',['Add pin'],'g386,327 G386,346 g463,325',...D);
node('op',517,339,85,38,'>',[],'g530,349 G530,367 r587,358',...D);
node('br',625,207,83,65,'Branch',[],'w637,237 w694,237 r638,256 W694,258',...D);
node('npill',649,135,96,22,'',[],'n731,145',...D);
node('fn',769,207,227,60,CL,[],'w781,237 w983,237 +781,257',...D);
node('fn',1021,207,140,110,ST,[],'w1033,237 w1147,237 o1033,256 n1145,257 G1034,274 R1034,291',...D);
node('set',1213,219,97,48,'SET',[],'w1228,237 W1298,237 n1229,257 N1295,257',...D);
node('ev',37,411,115,59,'GlowDown',CE,'w139,456 o142,427',...D);
node('fn',325,411,140,93,SRO,TW,'w337,456 w451,456 b338,475 g338,492',...D);
node('br',529,423,83,65,'Branch',[],'w541,453 w598,453 r542,472 W598,474',...D);
node('fn',697,423,227,62,CL,[],'w709,453 W910,453 +709,472',...D);
node('gr',145,519,140,54,GRO,TW,'b157,562 g269,562',...D);
node('op',349,531,107,44,'+',['Add pin'],'g361,544 G361,562 g440,541',...D);
node('op',529,543,100,38,'<=',[],'g541,553 G541,571 r614,562',...D);
N.push('<path d="M295 955h9l-4.500 5zM1087 1087h9l-4.500 5z" fill="#fff"/>');
N.push('<path d="M124 200h9v8h-9zM136 200h10M141 200v13M136 213h10" fill="none" stroke="#ddd" stroke-width="2"/>');

wire('b','M348 50L1545 56');
wire('b','M348 50C385 50 365 151 415 151');
wire('b','M348 50C440 50 470 151 572 151');
wire('b','M348 50C540 55 620 151 835 151');
wire('b','M348 50C700 55 1000 98 1170 112S1600 163 1915 163');
wire('b','M70 265C120 262 90 385 146 385',...B);
wire('b','M70 265C160 262 120 121 205 121',...B);
wire('b','M158 433C215 430 180 298 248 298M158 433C195 430 200 404 236 404M158 433C330 436 400 405 704 403M158 433C480 440 640 607 981 607');
wire('b','M422 703C475 700 460 604 524 604M704 625L751 610');
wire('b','M133 290C200 290 230 259 331 259M133 290C165 290 165 346 199 346M133 290C165 290 190 325 215 355C260 440 280 475 331 475M133 290C180 290 150 390 140 430C125 480 115 562 151 562',...D);
wire('n','M152 172L572 168');
wire('n','M368 124H430M1161 257H1222M745 147C765 155 748 250 775 257M745 147C800 145 780 230 762 250C730 330 690 380 675 420C660 450 680 472 703 472',...D);
wire('m','M152 139C190 145 190 161 235 163');
wire('p','M348 163L415 168M251 580C400 580 520 643 751 643');
wire('t','M251 598L295 582');
wire('g','M152 156L1532 160');
wire('g','M1677 58C1830 55 1760 90 1602 120L1170 206C960 250 880 289 960 289L1028 289M1677 58C1850 55 1770 105 1602 140L1170 244C900 305 860 349 1028 349');
wire('g','M505 268L568 271M507 268C600 265 700 247 795 247M508 268C508 250 440 226 400 208C370 196 370 187 390 187M857 256C905 256 880 285 830 309C730 355 710 390 745 389',...B);
wire('g','M332 346L380 328M332 346L524 349M463 325C495 322 480 316 440 308L340 288C320 284 322 276 332 276M285 562L355 544M285 562L535 553M440 541C470 541 455 530 430 524L340 504C320 500 325 492 332 492',...D);
wire('r','M368 298C390 290 390 257 415 257M1106 298L1148 316M1106 358L1148 335M1245 313C1305 313 1270 265 1170 232S1010 148 1075 148');
wire('r','M464 197H512M512 194L160 217L60 226H85M629 280C660 280 640 305 600 322',...B);
wire('r','M590 358C630 345 600 256 632 256M614 562C650 562 620 540 590 525L540 492C525 482 528 474 538 472',...D);
wire('o','M152 211C195 211 185 124 236 124M152 427C500 427 700 256 1027 256',...D);
wire('w','M152 120C250 120 320 132 415 132M524 132H570M716 132H835M956 132L1075 129M1145 129C1215 129 1190 -3 1255 -3M1151 150L1315 155M138 237H415M491 238C590 245 590 384 703 384M152 384H235M356 384H703M251 561H295M449 582L523 585M704 586L751 588M974 589H980');
wire('w','M162 228C200 228 160 102 205 102M279 366L362 351M432 351H565M642 352L745 354M879 354L925 351M996 354C1060 365 1103 440 1103 465Q1103 494 1070 494H572C525 490 530 370 560 362',...B);
wire('w','M152 107L235 105M368 105H430M152 240H331M465 240L631 237M708 237H775M996 237H1027M1161 237H1222M152 456H331M465 456L535 453M612 453H703',...D);
document.getElementById('wires').innerHTML=W.join('');
document.getElementById('nodes').innerHTML=N.join('');
</script>
<script src="https://cdn.jsdelivr.net/npm/bootstrap@5.3.0/dist/js/bootstrap.bundle.min.js"></script>
</body>
</html>
